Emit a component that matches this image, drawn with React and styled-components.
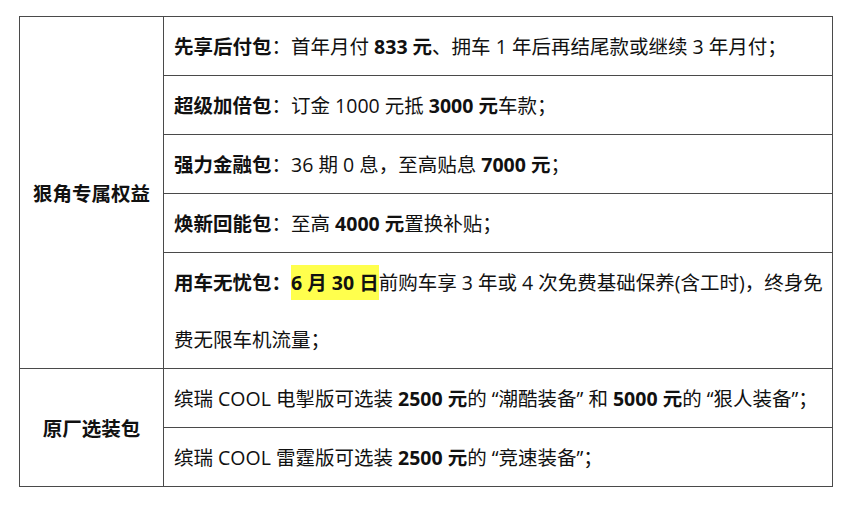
import React from "react";
import styled, { createGlobalStyle } from "styled-components";

const GlobalStyle = createGlobalStyle`
  html, body {
    margin: 0;
    padding: 0;
    background: #ffffff;
  }
  body {
    font-family: "Open Sans", "Noto Sans CJK SC", sans-serif;
    color: #111111;
  }
`;

const Page = styled.div`
  padding: 16px 19px 0 19px;
`;

const Table = styled.table`
  width: 814px;
  border-collapse: collapse;
  table-layout: fixed;
  border: 1px solid #3a3a3a;
`;

const HeadCell = styled.td`
  width: 143px;
  border: 1px solid #4a4a4a;
  text-align: center;
  vertical-align: middle;
  font-size: 19.5px;
  font-weight: 700;
  line-height: 57px;
  padding: 1px 0 0 0;
`;

const Cell = styled.td`
  border: 1px solid #4a4a4a;
  font-size: 19.5px;
  line-height: 57px;
  padding: 1px 10px 0 10px;
  white-space: nowrap;
`;

const B = styled.b`
  font-weight: 700;
`;

const Mark = styled.b`
  font-weight: 700;
  background: #ffff4d;
  padding: 4px 0;
`;

const rights = [
  <>
    <B>先享后付包</B>：首年月付 <B>833 元</B>、拥车 1 年后再结尾款或继续 3 年月付；
  </>,
  <>
    <B>超级加倍包</B>：订金 1000 元抵 <B>3000 元</B>车款；
  </>,
  <>
    <B>强力金融包</B>：36 期 0 息，至高贴息 <B>7000 元</B>；
  </>,
  <>
    <B>焕新回能包</B>：至高 <B>4000 元</B>置换补贴；
  </>,
  <>
    <B>用车无忧包：</B>
    <Mark>6 月 30 日</Mark>前购车享 3 年或 4 次免费基础保养(含工时)，终身免
    <br />
    费无限车机流量；
  </>,
];

const options = [
  <>
    缤瑞 COOL 电掣版可选装 <B>2500 元</B>的 “潮酷装备” 和 <B>5000 元</B>的 “狠人装备”；
  </>,
  <>
    缤瑞 COOL 雷霆版可选装 <B>2500 元</B>的 “竞速装备”；
  </>,
];

const Group = ({ title, items }) =>
  items.map((item, i) => (
    <tr key={i}>
      {i === 0 && <HeadCell rowSpan={items.length}>{title}</HeadCell>}
      <Cell>{item}</Cell>
    </tr>
  ));

export default function App() {
  return (
    <>
      <GlobalStyle />
      <Page>
        <Table>
          <tbody>
            <Group title="狠角专属权益" items={rights} />
            <Group title="原厂选装包" items={options} />
          </tbody>
        </Table>
      </Page>
    </>
  );
}
